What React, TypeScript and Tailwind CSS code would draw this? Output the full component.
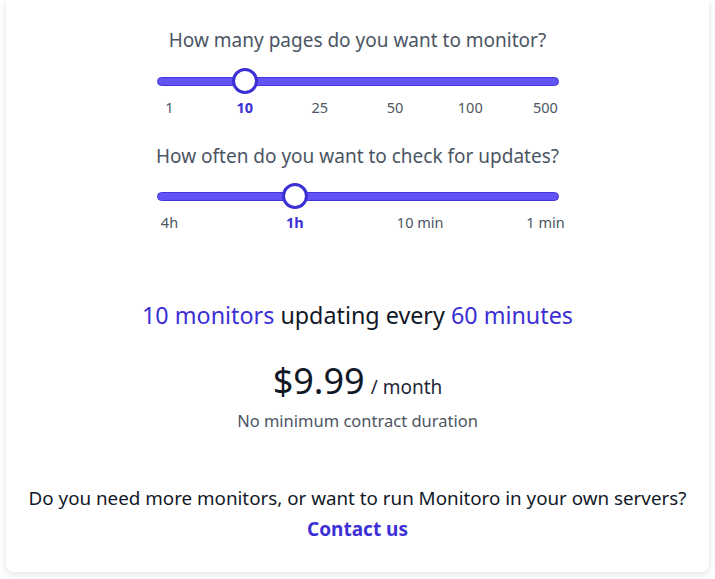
import React from 'react'

const font = { fontFamily: '"Noto Sans", "Open Sans", sans-serif' }

function Slider({ steps, value, labels }: { steps: number; value: number; labels: string[] }) {
  const pct = (value / (steps - 1)) * 100
  return (
    <div className="w-[402px] mx-auto">
      <div className="relative h-[26px] flex items-center">
        <div className="w-full h-[9px] rounded-full bg-[#6254f4] border border-[#4336db]" />
        {/* thumb sits over the track */}
        <div className="absolute top-0 left-[13px] right-[13px] h-[26px]">
          <div
            className="absolute top-0 w-[26px] h-[26px] -ml-[13px] rounded-full bg-white border-[3px] border-[#3b2fd6]"
            style={{ left: `${pct}%` }}
          />
        </div>
      </div>
      <div className="flex justify-between mt-[3px]">
        {labels.map((l, i) => (
          <div key={l} className="w-[26px] flex justify-center">
            <span
              className={
                'whitespace-nowrap text-[14.5px] leading-[20px] ' +
                (i === value ? 'font-bold text-[#3b2fd6]' : 'text-[#4b5563]')
              }
            >
              {l}
            </span>
          </div>
        ))}
      </div>
    </div>
  )
}

export default function App() {
  return (
    <div className="w-[715px] h-[579px] bg-white overflow-hidden" style={font}>
      <div className="mx-[6px] h-[572px] bg-white rounded-b-lg shadow-[0_2px_8px_rgba(0,0,0,0.12)] pt-[26px] text-center">
        <p className="text-[19px] leading-[28px] text-[#4b5563]">How many pages do you want to monitor?</p>
        <div className="mt-[14px]">
          <Slider steps={6} value={1} labels={['1', '10', '25', '50', '100', '500']} />
        </div>
        <p className="mt-[25px] text-[19px] leading-[28px] text-[#4b5563]">How often do you want to check for updates?</p>
        <div className="mt-[13px]">
          <Slider steps={4} value={1} labels={['4h', '1h', '10 min', '1 min']} />
        </div>

        <p className="mt-[67px] text-[23.3px] leading-[32px] text-[#111827]">
          <span className="text-[#3b2fd6]">10 monitors</span> updating every{' '}
          <span className="text-[#3b2fd6]">60 minutes</span>
        </p>

        <div className="mt-[26px] flex items-baseline justify-center gap-[6px] text-[#111827]">
          <span className="text-[36px] leading-[48px]">$9.99</span>
          <span className="text-[19px] leading-[28px] text-[#1f2937]">/ month</span>
        </div>
        <p className="mt-[2px] text-[16.5px] leading-[28px] text-[#4b5563]">No minimum contract duration</p>

        <p className="mt-[49px] text-[18.8px] leading-[28px] text-[#111827]">
          Do you need more monitors, or want to run Monitoro in your own servers?
        </p>
        <p className="mt-[3px] text-[19px] leading-[28px] font-bold text-[#3b2fd6]">Contact us</p>
      </div>
    </div>
  )
}
